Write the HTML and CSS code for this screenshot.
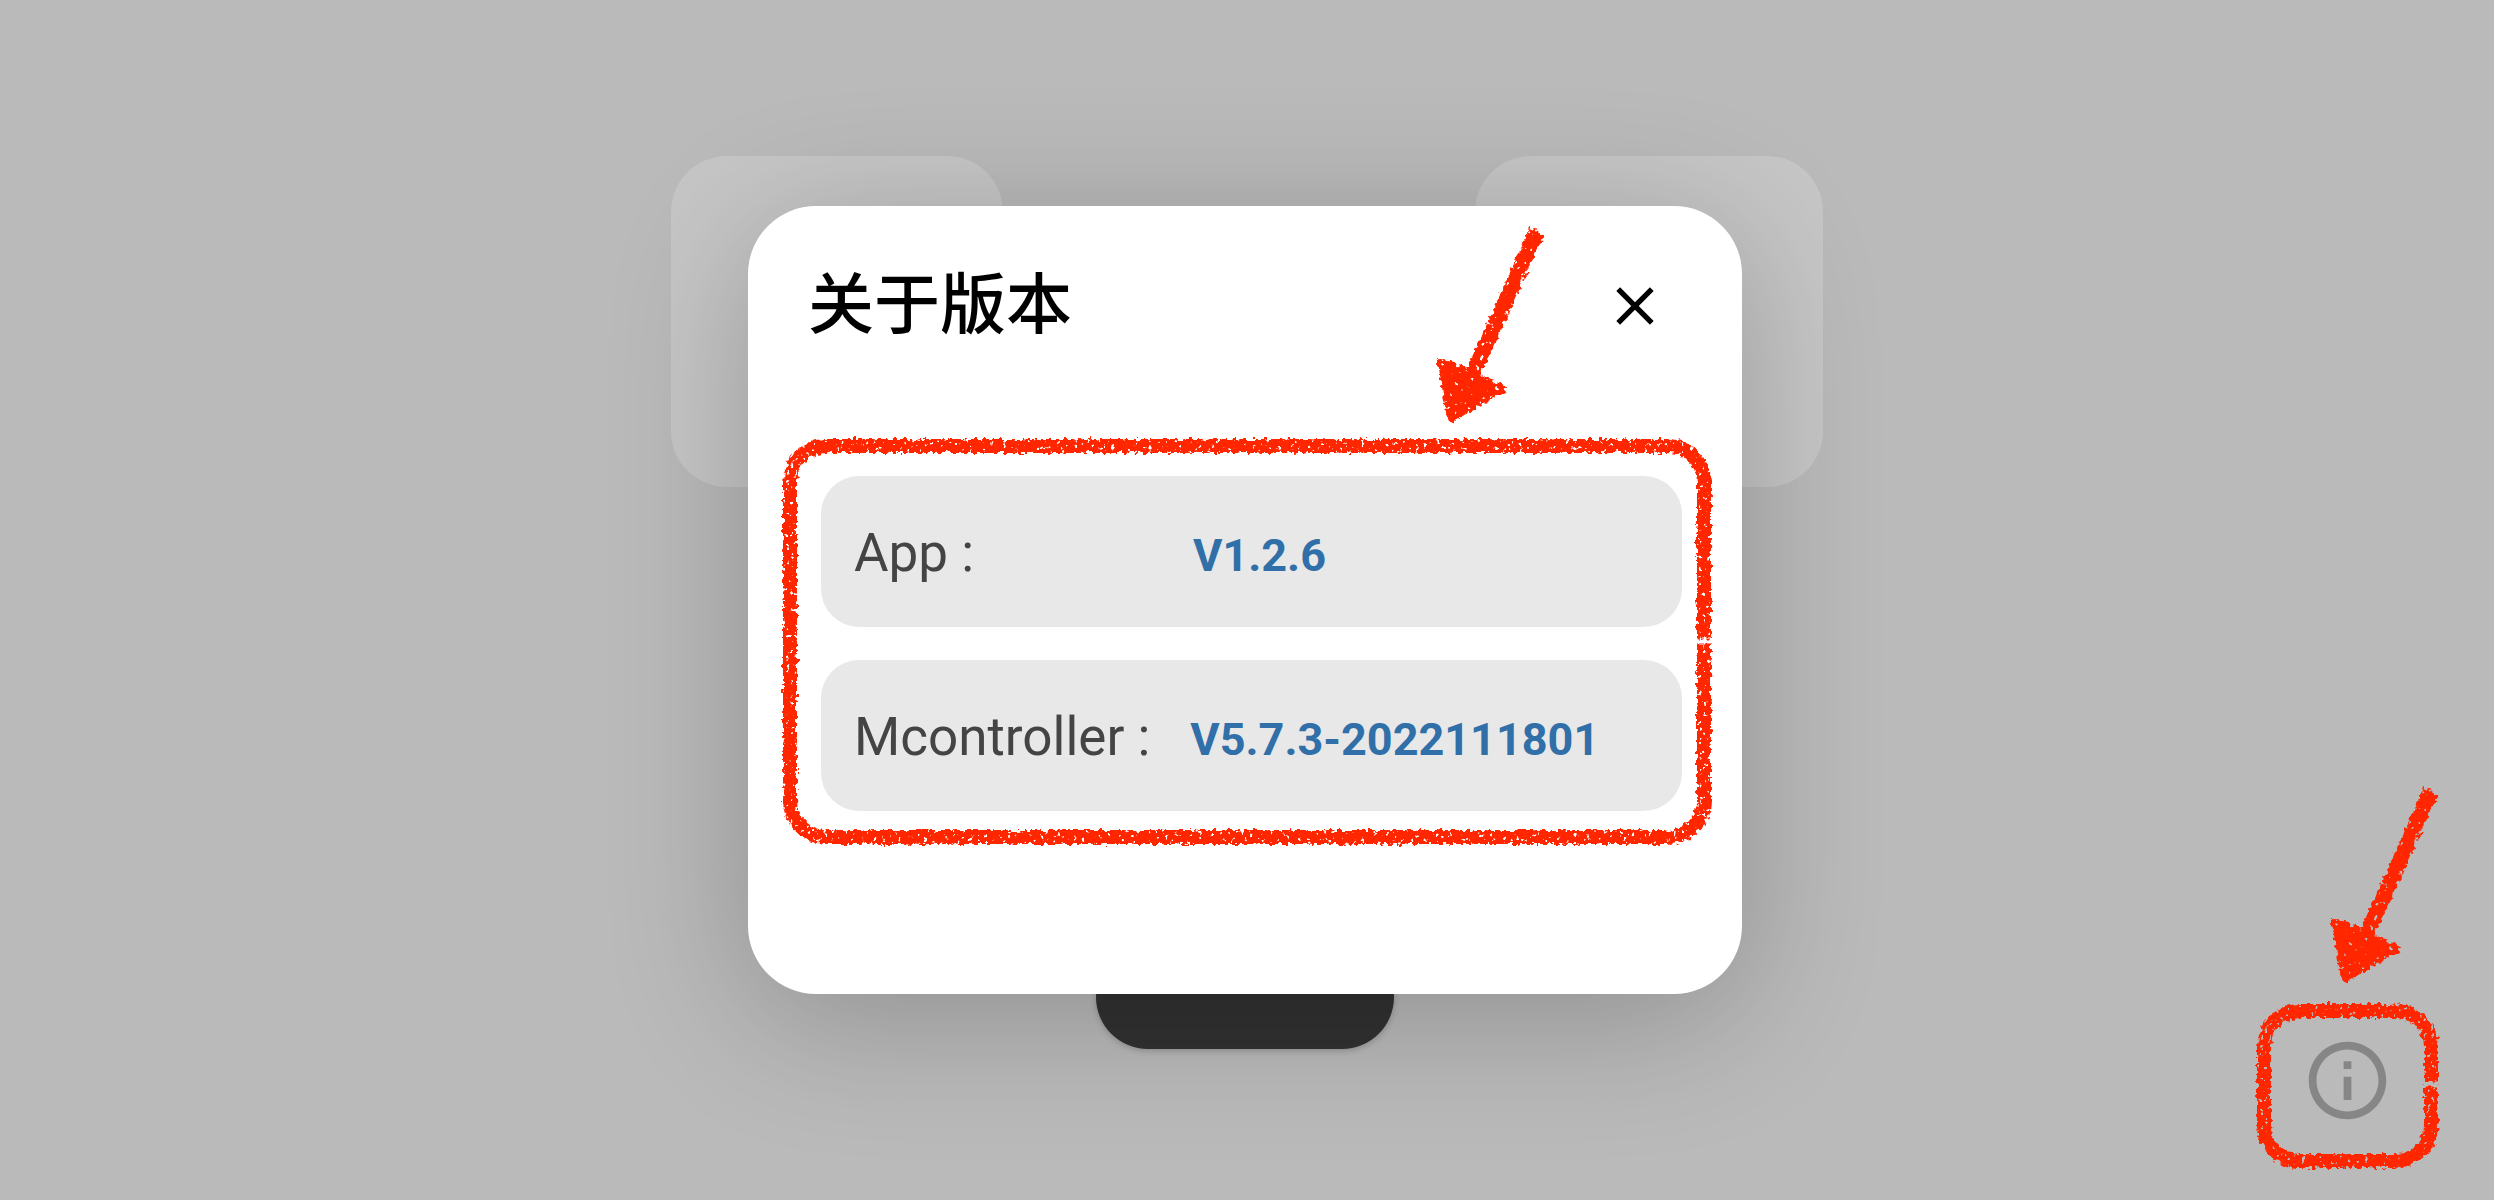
FILE: index.html
```html
<!DOCTYPE html>
<html lang="zh-CN">
<head>
<meta charset="utf-8">
<meta name="viewport" content="width=device-width, initial-scale=1">
<title>关于版本</title>
<link rel="stylesheet" href="styles.css">
</head>
<body>
<svg class="defs" aria-hidden="true">
  <defs>
    <filter id="crayon" filterUnits="userSpaceOnUse" x="-20" y="-20" width="1100" height="600">
      <feTurbulence type="fractalNoise" baseFrequency="0.2" numOctaves="2" seed="4" result="edge"/>
      <feDisplacementMap in="SourceGraphic" in2="edge" scale="8" xChannelSelector="R" yChannelSelector="G" result="rough"/>
      <feTurbulence type="fractalNoise" baseFrequency="0.24" numOctaves="2" seed="9" result="grain"/>
      <feColorMatrix in="grain" type="matrix" values="0 0 0 0 0  0 0 0 0 0  0 0 0 0 0  -12 0 0 0 8.8" result="holes"/>
      <feComposite in="rough" in2="holes" operator="in"/>
    </filter>
    <filter id="crayon-solid" filterUnits="userSpaceOnUse" x="-20" y="-20" width="200" height="260">
      <feTurbulence type="fractalNoise" baseFrequency="0.2" numOctaves="2" seed="6" result="edge"/>
      <feDisplacementMap in="SourceGraphic" in2="edge" scale="8" xChannelSelector="R" yChannelSelector="G" result="rough"/>
      <feTurbulence type="fractalNoise" baseFrequency="0.2" numOctaves="2" seed="9" result="grain"/>
      <feColorMatrix in="grain" type="matrix" values="0 0 0 0 0  0 0 0 0 0  0 0 0 0 0  -12 0 0 0 9.2" result="holes"/>
      <feComposite in="rough" in2="holes" operator="in"/>
    </filter>
  </defs>
</svg>

<main class="scene">
  <div class="tiles">
    <div class="tile tile-left"></div>
    <div class="tile tile-right"></div>
  </div>
  <button class="primary" type="button" aria-label="开始"></button>
</main>

<div class="info">
  <button class="info-button" type="button" aria-label="关于版本">
    <svg viewBox="0 0 24 24" aria-hidden="true"><path d="M11 7h2v2h-2zm0 4h2v6h-2zm1-9C6.48 2 2 6.48 2 12s4.48 10 10 10 10-4.48 10-10S17.52 2 12 2zm0 18c-4.41 0-8-3.59-8-8s3.59-8 8-8 8 3.59 8 8-3.59 8-8 8z"/></svg>
  </button>
  <svg class="frame" aria-hidden="true"><rect class="frame-line frame-line-small" x="12" y="12" rx="36"/></svg>
  <svg class="arrow arrow-info" viewBox="0 0 130 220" aria-hidden="true">
    <g filter="url(#crayon-solid)"><path class="arrow-shaft" d="M112 15 48 157"/><path class="arrow-head" d="M17 146 76 173 26 202Z"/></g>
  </svg>
</div>

<div class="overlay">
  <section class="dialog" role="dialog" aria-labelledby="dialog-title">
    <header class="dialog-header">
      <h1 id="dialog-title" class="dialog-title">关于版本</h1>
      <button class="close" type="button" aria-label="关闭">
        <svg viewBox="0 0 24 24" aria-hidden="true"><path d="M19 6.41 17.59 5 12 10.59 6.41 5 5 6.41 10.59 12 5 17.59 6.41 19 12 13.41 17.59 19 19 17.59 13.41 12z"/></svg>
      </button>
    </header>
    <div class="versions">
      <dl class="version-list">
        <div class="version"><dt class="version-name">App :</dt><dd class="version-value">V1.2.6</dd></div>
        <div class="version"><dt class="version-name">Mcontroller :</dt><dd class="version-value">V5.7.3-2022111801</dd></div>
      </dl>
      <svg class="frame" aria-hidden="true"><rect class="frame-line frame-line-large" x="12" y="12" rx="36"/></svg>
      <svg class="arrow arrow-versions" viewBox="0 0 130 220" aria-hidden="true">
        <g filter="url(#crayon-solid)"><path class="arrow-shaft" d="M112 15 48 157"/><path class="arrow-head" d="M17 146 76 173 26 202Z"/></g>
      </svg>
    </div>
  </section>
</div>
</body>
</html>
```
FILE: styles.css
```css
* {
  box-sizing: border-box;
}

body {
  margin: 0;
  background: #bababa;
  font-family: Roboto, "Noto Sans CJK SC", sans-serif;
}

button {
  padding: 0;
  border: 0;
  background: none;
}

.defs {
  position: absolute;
  width: 0;
  height: 0;
}

/* Dimmed screen behind the dialog */
.scene {
  display: flex;
  flex-direction: column;
  align-items: center;
  justify-content: space-between;
  min-height: 100vh;
  padding: 156px 24px 151px;
}

.tiles {
  display: flex;
  justify-content: center;
  gap: 472px;
}

.tile {
  width: 332px;
  height: 331px;
  border-radius: 56px;
  background: #c6c6c6;
}

.tile-right {
  width: 348px;
}

.primary {
  width: 298px;
  height: 104px;
  margin-right: 4px;
  border-radius: 52px;
  background: #323232;
  box-shadow: 0 2px 6px rgba(0, 0, 0, 0.2);
}

.info {
  position: absolute;
  right: 51px;
  bottom: 27px;
  display: grid;
  place-items: center;
  width: 191px;
  height: 174px;
  padding-bottom: 12px;
}

.info-button svg {
  display: block;
  width: 93px;
  height: 93px;
  fill: #868686;
}

/* Dialog */
.overlay {
  position: absolute;
  inset: 0;
  display: grid;
  place-items: center;
  padding: 24px 28px 24px 24px;
  pointer-events: none;
}

.dialog {
  width: 100%;
  max-width: 994px;
  padding: 54px 60px 183px;
  border-radius: 68px;
  background: #fff;
  box-shadow: 0 24px 140px rgba(0, 0, 0, 0.23);
  pointer-events: auto;
}

.dialog-header {
  display: flex;
  align-items: center;
  justify-content: space-between;
  padding-right: 15px;
}

.dialog-title {
  margin: 0;
  font-size: 66px;
  font-weight: 500;
  line-height: 92px;
  color: #000;
}

.close svg {
  display: block;
  width: 64px;
  height: 64px;
  fill: #000;
}

.versions {
  position: relative;
  margin-top: 124px;
  padding-left: 13px;
}

.version-list {
  display: grid;
  gap: 33px;
  margin: 0;
}

.version {
  display: flex;
  align-items: baseline;
  gap: 40px;
  min-height: 151px;
  padding: 45px 33px 36px;
  border-radius: 38px;
  background: #e8e8e8;
}

.version-name {
  min-width: 299px;
  font-size: 53px;
  line-height: 64px;
  color: #444;
}

.version:last-child .version-name {
  min-width: 0;
}

.version-value {
  margin: 0;
  font-size: 45px;
  font-weight: 700;
  line-height: 64px;
  color: #306fa8;
}

/* Hand-drawn markers */
.frame,
.arrow {
  position: absolute;
  overflow: visible;
  pointer-events: none;
}

.info .frame {
  inset: 0;
  width: 100%;
  height: 100%;
}

.versions .frame {
  top: -42px;
  left: -30px;
  width: 938px;
  height: calc(100% + 80px);
}

.frame-line {
  width: calc(100% - 24px);
  height: calc(100% - 24px);
  fill: none;
  stroke: #ff2600;
  stroke-width: 14px;
  filter: url(#crayon);
}

.frame-line-large {
  stroke-dasharray: 1055 5 1600;
}

.frame-line-small {
  stroke-dasharray: 186 5 600;
}

.arrow {
  width: 130px;
  height: 220px;
}

.arrow-versions {
  right: 127px;
  bottom: calc(100% + 40px);
}

.arrow-info {
  left: 67px;
  bottom: calc(100% + 3px);
}

.arrow-shaft {
  fill: none;
  stroke: #ff2600;
  stroke-width: 15px;
}

.arrow-head {
  fill: #ff2600;
  stroke: #ff2600;
  stroke-width: 8px;
  stroke-linejoin: round;
}
```
